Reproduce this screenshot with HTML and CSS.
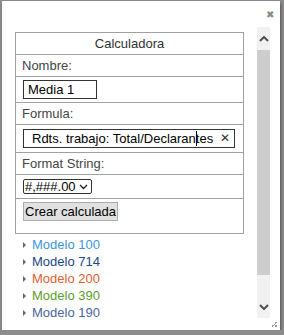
FILE: index.html
```html
<!DOCTYPE html>
<html lang="es">
<head>
    <meta charset="UTF-8">
    <title>Calculadora</title>
    <link rel="stylesheet" href="styles.css">
</head>
<body>
    <div class="dialog">
        <div class="titlebar">
            <span class="close">&#x2716;</span>
        </div>
        <div class="dialog-body">
            <div class="content">
                <table class="calc">
                    <tr><th>Calculadora</th></tr>
                    <tr><td class="label">Nombre:</td></tr>
                    <tr><td class="field"><div class="input name">Media 1</div></td></tr>
                    <tr><td class="label">Formula:</td></tr>
                    <tr><td class="field">
                        <div class="input formula">
                            <span class="text">Rdts. trabajo: Total/Declaran<span class="caret"></span>tes</span>
                            <span class="clear">&#x2715;</span>
                        </div>
                    </td></tr>
                    <tr><td class="label">Format String:</td></tr>
                    <tr><td class="field">
                        <div class="select">#,###.00
                            <svg width="9" height="6" viewBox="0 0 9 6"><path d="M1 1l3.5 3.5L8 1" fill="none" stroke="#222" stroke-width="1.3"/></svg>
                        </div>
                    </td></tr>
                    <tr><td class="field btn-cell"><button class="btn">Crear calculada</button></td></tr>
                </table>

                <ul class="tree">
                    <li class="m100">Modelo 100</li>
                    <li class="m714">Modelo 714</li>
                    <li class="m200">Modelo 200</li>
                    <li class="m390">Modelo 390</li>
                    <li class="m190">Modelo 190</li>
                </ul>
            </div>
            <div class="scrollbar">
                <div class="arrow">
                    <svg width="10" height="6" viewBox="0 0 10 6"><path d="M1 5l4-4 4 4" fill="none" stroke="#505050" stroke-width="2"/></svg>
                </div>
                <div class="track"><div class="thumb"></div></div>
                <div class="arrow">
                    <svg width="10" height="6" viewBox="0 0 10 6"><path d="M1 1l4 4 4-4" fill="none" stroke="#505050" stroke-width="2"/></svg>
                </div>
            </div>
        </div>
        <span class="grip"></span>
    </div>
</body>
</html>
```
FILE: styles.css
```css
* {
    margin: 0;
    padding: 0;
    box-sizing: border-box;
}
li {
    list-style: none;
}
body {
    background: #8c8c8c;
    font-family: "Liberation Sans", Arial, sans-serif;
    font-size: 13px;
    color: #333;
}
.dialog {
    position: relative;
    width: 278px;
    height: 329px;
    margin: 1px 0 0 2px;
    background: #fff;
    box-shadow: 1px 2px 3px rgba(0,0,0,0.4);
}
.titlebar {
    height: 26px;
    display: flex;
    justify-content: flex-end;
    align-items: center;
    padding-right: 6px;
}
.close {
    color: #8a8a8a;
    font-size: 10px;
}
.dialog-body {
    display: flex;
    height: 291px;
    padding-right: 10px;
}
.content {
    flex: 1;
    padding: 5px 13px 0 13px;
}
.calc {
    width: 229px;
    border-collapse: collapse;
}
.calc th,
.calc td {
    border: 1px solid #a0a0a0;
    text-align: left;
}
.calc th {
    font-weight: normal;
    text-align: center;
    height: 22px;
}
.calc .label {
    height: 22px;
    padding-left: 6px;
    color: #444;
}
.calc .field {
    padding: 3px 7px;
}
.input {
    border: 1px solid #333;
    height: 19px;
    line-height: 17px;
    color: #000;
    padding-left: 4px;
}
.name {
    width: 74px;
}
.formula {
    width: 212px;
    display: flex;
    justify-content: space-between;
    padding-left: 8px;
    padding-right: 4px;
    margin: 1px 0;
}
.caret {
    display: inline-block;
    width: 1px;
    height: 15px;
    margin-right: -1px;
    background: #000;
    vertical-align: -3px;
}
.clear {
    font-size: 12px;
    color: #333;
}
.select {
    width: 69px;
    height: 15px;
    border: 1px solid #333;
    border-radius: 2px;
    display: flex;
    align-items: center;
    justify-content: space-between;
    padding: 0 3px 0 1px;
    line-height: 13px;
    color: #000;
    margin: 1px 0;
}
.btn-cell {
    height: 35px;
    vertical-align: top;
    padding-top: 7px;
}
.btn {
    font-family: inherit;
    font-size: 13px;
    color: #000;
    background: #e1e1e1;
    border: 1px solid #adadad;
    height: 19px;
    padding: 0 1px;
    line-height: 16px;
}
.tree {
    padding: 2px 0 0 8px;
}
.tree li {
    height: 17px;
    line-height: 17px;
    padding-left: 9px;
    position: relative;
}
.tree li::before {
    content: "";
    position: absolute;
    left: 0;
    top: 6px;
    border-left: 3px solid #666;
    border-top: 3px solid transparent;
    border-bottom: 3px solid transparent;
}
.m100 { color: #3c96e0; }
.m714 { color: #1c4a85; }
.m200 { color: #e2602e; }
.m390 { color: #5c9e2a; }
.m190 { color: #4a669e; }
.scrollbar {
    width: 13px;
    background: #f1f1f1;
    display: flex;
    flex-direction: column;
}
.scrollbar .arrow {
    height: 23px;
    display: flex;
    align-items: center;
    justify-content: center;
}
.track {
    flex: 1;
}
.thumb {
    height: 225px;
    background: #cdcdcd;
}
.grip {
    position: absolute;
    right: 3px;
    bottom: 3px;
    width: 6px;
    height: 6px;
    background: linear-gradient(135deg, transparent 50%, #999 50%, #999 62%, transparent 62%, transparent 75%, #999 75%);
}
```
